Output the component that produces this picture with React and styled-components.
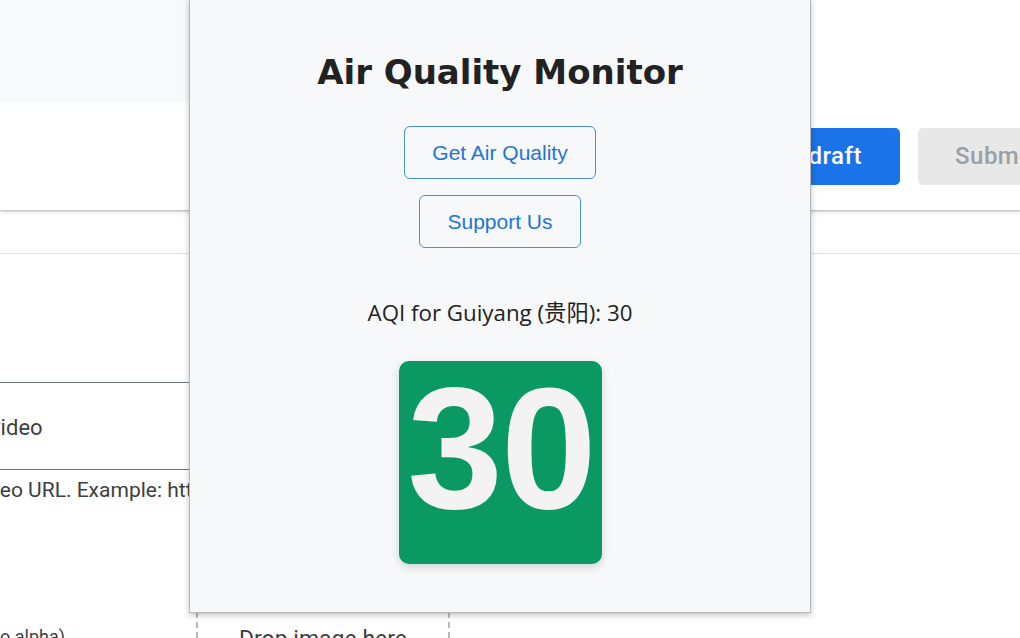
import React from 'react';
import styled, { createGlobalStyle } from 'styled-components';

const GlobalStyle = createGlobalStyle`
  html, body {
    margin: 0;
    padding: 0;
    background: #ffffff;
  }
  body {
    width: 1020px;
    height: 638px;
    overflow: hidden;
    font-family: Roboto, "Liberation Sans", sans-serif;
  }
`;

function App() {
  return (
    <Page>
      <GlobalStyle />
      <Header>
        <HeaderTop>
          <Banner />
        </HeaderTop>
        <HeaderActions>
          <PrimaryButton>Save draft</PrimaryButton>
          <DisabledButton>Submit for review</DisabledButton>
        </HeaderActions>
      </Header>
      <Strip />

      <Content>
        <FieldGroup>
          <InputBox>Promo video</InputBox>
          <Helper>Enter YouTube video URL. Example: https://www.youtube.com/watch?v=abc</Helper>
        </FieldGroup>
        <ImageRow>
          <Note>
            <span>640x400 PNG (no alpha)</span>
          </Note>
          <DropZone>Drop image here</DropZone>
        </ImageRow>
      </Content>

      <Popup>
        <Title>Air Quality Monitor</Title>
        <ActionButton>Get Air Quality</ActionButton>
        <ActionButton>Support Us</ActionButton>
        <AqiLabel>AQI for Guiyang (贵阳): 30</AqiLabel>
        <AqiBadge color="#0a9963">30</AqiBadge>
      </Popup>
    </Page>
  );
}

export default App;

const Page = styled.div`
  position: relative;
  width: 1020px;
  height: 638px;
  overflow: hidden;
  background: #ffffff;
`;

const Header = styled.div`
  display: flex;
  flex-direction: column;
  background: #ffffff;
  box-shadow: 0 1px 2px rgba(60, 64, 67, 0.35), 0 2px 6px rgba(60, 64, 67, 0.12);
  position: relative;
  z-index: 1;
`;

const HeaderTop = styled.div`
  height: 102px;
  display: flex;
`;

const Banner = styled.div`
  width: 500px;
  background: #f8f9fa;
`;

const HeaderActions = styled.div`
  height: 108px;
  display: flex;
  align-items: center;
  gap: 18px;
  padding-left: 729px;
  white-space: nowrap;
`;

const PrimaryButton = styled.div`
  flex: none;
  width: 171px;
  height: 57px;
  box-sizing: border-box;
  display: flex;
  align-items: center;
  justify-content: flex-end;
  padding-right: 38px;
  border-radius: 5px;
  background: #1a73e8;
  color: #ffffff;
  font-family: Roboto, "Liberation Sans", sans-serif;
  font-weight: 500;
  font-size: 24px;
  letter-spacing: 0.5px;
`;

const DisabledButton = styled(PrimaryButton)`
  width: 240px;
  background: #e8e8e8;
  color: #9aa0a6;
  justify-content: flex-start;
  padding-right: 0;
  padding-left: 37px;
`;

const Strip = styled.div`
  height: 43px;
  border-bottom: 1px solid #e0e0e0;
  background: #ffffff;
`;

const Content = styled.div`
  display: flex;
  flex-direction: column;
  padding-top: 128px;
  margin-left: -97px;
`;

const FieldGroup = styled.div`
  display: flex;
  flex-direction: column;
  width: 700px;
`;

const InputBox = styled.div`
  height: 88px;
  box-sizing: border-box;
  border-top: 1.5px solid #70757a;
  border-bottom: 1.5px solid #70757a;
  display: flex;
  align-items: center;
  padding-left: 16px;
  padding-top: 3px;
  font-size: 22px;
  color: #3c4043;
`;

const Helper = styled.div`
  margin-top: 8px;
  margin-left: -71px;
  font-size: 21px;
  line-height: 24px;
  color: #3c4043;
  white-space: nowrap;
`;

const ImageRow = styled.div`
  display: flex;
  align-items: flex-start;
  margin-top: 28px;
`;

const Note = styled.div`
  width: 293px;
  flex: none;
  box-sizing: border-box;
  padding-right: 131px;
  margin-top: 96px;
  display: flex;
  justify-content: flex-end;
  font-size: 18px;
  color: #3c4043;
  white-space: nowrap;

  span {
    flex: none;
  }
`;

const DropZone = styled.div`
  flex: none;
  width: 254px;
  height: 200px;
  box-sizing: border-box;
  border: 2px dashed #b8bbbe;
  display: flex;
  align-items: flex-start;
  justify-content: center;
  padding-top: 94px;
  font-size: 23px;
  color: #3c4043;
  white-space: nowrap;
`;

const Popup = styled.div`
  position: absolute;
  left: 189px;
  top: -1px;
  width: 622px;
  height: 614px;
  box-sizing: border-box;
  background: #f7f8fa;
  border: 1px solid #b9b9b9;
  box-shadow: 0 2px 6px rgba(0, 0, 0, 0.25);
  z-index: 5;
  display: flex;
  flex-direction: column;
  align-items: center;
  padding-top: 52px;
`;

const Title = styled.h1`
  margin: 0 0 34px;
  font-family: "DejaVu Sans", Verdana, sans-serif;
  font-weight: bold;
  font-size: 34px;
  line-height: 40px;
  color: #222222;
`;

const ActionButton = styled.button`
  height: 53px;
  box-sizing: border-box;
  padding: 0 27px;
  margin-bottom: 16px;
  background: transparent;
  border: 1.5px solid #4a8fdc;
  border-radius: 6px;
  color: #2474d4;
  font-family: "Liberation Sans", Arial, sans-serif;
  font-size: 21px;
  cursor: pointer;
`;

const AqiLabel = styled.div`
  margin-top: 35px;
  font-family: "Open Sans", "Noto Sans CJK SC", sans-serif;
  font-size: 22.3px;
  line-height: 28px;
  color: #222222;
`;

const AqiBadge = styled.div`
  margin-top: 34px;
  width: 203px;
  height: 203px;
  box-sizing: border-box;
  padding-bottom: 30px;
  padding-left: 2px;
  border-radius: 10px;
  background: ${(props) => props.color};
  box-shadow: 0 3px 10px rgba(0, 0, 0, 0.15);
  display: flex;
  align-items: center;
  justify-content: center;
  font-family: "Liberation Sans", Arial, sans-serif;
  font-weight: bold;
  font-size: 172px;
  letter-spacing: -2px;
  line-height: 1;
  color: #f3f3f3;
`;
